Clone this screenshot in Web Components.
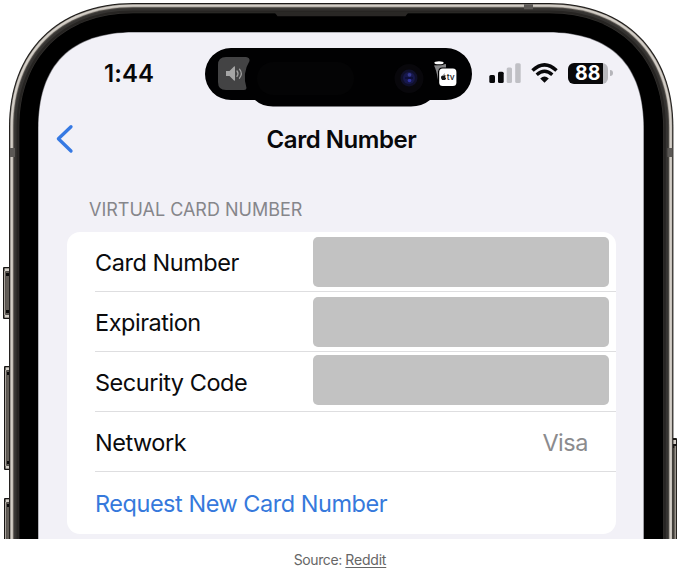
<!DOCTYPE html>
<html lang="en">
<head>
<meta charset="utf-8">
<title>Card Number</title>
<style>
html,body{margin:0;background:#fff}
body{width:680px;height:569px;overflow:hidden;font-family:Inter,"Liberation Sans",sans-serif;color:#0b0b0d}
</style>
</head>
<body>
<phone-frame>
  <status-bar time="1:44" level="88"></status-bar>
  <nav-bar>Card Number</nav-bar>
  <list-section>
    <span slot="heading">VIRTUAL CARD NUMBER</span>
    <list-row redacted>Card Number</list-row>
    <list-row redacted>Expiration</list-row>
    <list-row redacted style="--lift:-2px">Security Code</list-row>
    <list-row>Network<span slot="value">Visa</span></list-row>
    <list-row action>Request New Card Number</list-row>
  </list-section>
</phone-frame>
<source-caption>Source: <a>Reddit</a></source-caption>
<script>
const define = (name, html, setup) => customElements.define(name, class extends HTMLElement {
  constructor() {
    super();
    this.attachShadow({mode: 'open'}).innerHTML = html;
  }
  connectedCallback() { if (setup) setup(this, this.shadowRoot); }
});

// Rounded outline with continuous corners: e = corner extent, k = handle ratio.
const outline = (l, t, r, e, k) => {
  const h = e * (1 - k);
  return `M${l} 700V${t+e}C${l} ${t+h} ${l+h} ${t} ${l+e} ${t}H${r-e}C${r-h} ${t} ${r} ${t+h} ${r} ${t+e}V700Z`;
};
const layer = (i, fill) => `<path fill="${fill}" d="${outline(9+i, 3+i, 673.4-i, 124-i, .61)}"/>`;
const sideKey = (x, y, h, w) => `<rect x="${x}" y="${y}" width="${w}" height="${h}" rx="1" fill="#171513"/>
  <rect x="${x+1}" y="${y+4}" width="1.3" height="${h-8}" fill="#aaa49c"/><rect x="${x+2.3}" y="${y+5}" width="${w-3.5}" height="${h-10}" fill="#625d57"/>
  <rect x="${x+1.5}" y="${y+1.3}" width="${w-2}" height="3" fill="#d4cfc8"/><rect x="${x+1.5}" y="${y+h-4.3}" width="${w-2}" height="3" fill="#d4cfc8"/>
  <rect x="${x+3}" y="${y+6}" width="${w-3}" height="3" fill="#0b0a0a"/><rect x="${x+3}" y="${y+h-9}" width="${w-3}" height="3" fill="#0b0a0a"/>`;

define('phone-frame', `<style>
:host{display:block;position:relative;width:680px;height:539px;overflow:hidden}
.case{position:absolute;inset:0;z-index:0}
.screen{position:relative;box-sizing:border-box;width:644px;height:539px;padding:33px 0 0 39px;display:flex;flex-direction:column}
</style>
<svg class="case" width="680" height="539" viewBox="0 0 680 539">
${sideKey(3,267,52,8)}${sideKey(4,366,104,7)}${sideKey(4,498,60,7)}
<rect x="672" y="438" width="5" height="120" rx="1" fill="#191715"/><rect x="673" y="448" width="1.5" height="100" fill="#5f5a54"/><rect x="674.5" y="446" width="1.6" height="100" fill="#9a948c"/><rect x="673" y="440" width="3" height="4" fill="#d4cfc8"/>
${layer(0,'#1c1a18')}${layer(.9,'#6b6660')}${layer(1.5,'#d3cec7')}${layer(3.6,'#aaa49d')}${layer(4.3,'#4a4743')}${layer(5.3,'#353331')}${layer(7.6,'#262422')}${layer(9.8,'#373533')}${layer(10.3,'#000')}
<path d="M275 13H408L405.5 16.3H277.500Z" fill="#292725"/>
<path d="M524 4.200h9v5h-9zM10 148h5v9h-5zM667.400 148h5v9h-5z" fill="#5b5855"/>
<path d="${outline(38,32,643.9,96,.66)}" fill="#77777c"/>
<path d="${outline(38.500,32.600,643.400,96,.66)}" fill="#f2f1f7"/>
</svg>
<div class="screen"><slot></slot></div>`);

define('status-bar', `<style>
:host{display:grid;grid-template-columns:166px 267px 1fr;height:79px;align-items:start}
.time{margin:27px 0 0 65px;font-size:24px;line-height:27px;font-weight:600;letter-spacing:.1px;color:#08080a}
.island{margin-top:15px;display:block}
.icons{display:flex;align-items:center;padding:28px 0 0 17px;height:24px}
.wifi{margin-left:10px}
.bat{margin-left:10px;display:flex;align-items:center;gap:2px}
.cell{width:40px;height:21px;border-radius:6px;background:linear-gradient(90deg,#08080a 35.500px,#b9b9be 35.500px);font-size:19.500px;line-height:20px;font-weight:700;color:#fff;box-sizing:border-box;padding-left:7px}
.cell span{letter-spacing:0}
.nub{width:2.500px;height:6px;background:#b5b5ba;border-radius:0 3px 3px 0}
</style>
<div class="time"></div>
<svg class="island" width="267" height="60" viewBox="205 48 267 60">
<path d="M231 48H446A26 26 0 0 1 446 100H430Q422 106.500 411 106.500H273Q262 106.500 255 100H231A26 26 0 0 1 231 48Z" fill="#010102"/>
<rect x="257" y="62" width="97" height="33" rx="16" fill="#040405"/>
<path d="M226 57H246Q250 57.500 249.500 61Q242 73 246.500 88Q246.500 90 244 90H226Q218 90 218 82V65Q218 57 226 57Z" fill="#434344"/>
<path d="M226 71h3.500l4.500-4.500q1-.8 1 .5v13q0 1.300-1 .5l-4.500-4.500H226z" fill="#a5a5a5"/>
<path d="M237 71q2 2.700 0 5.400M239.500 69.200q3.600 4.500 0 9" fill="none" stroke="#a0a0a0" stroke-width="1.300" stroke-linecap="round"/>
<circle cx="409" cy="78.500" r="14.500" fill="#08070b"/><circle cx="409" cy="78" r="8.500" fill="#10102a"/><circle cx="409" cy="78" r="6" fill="#17184c"/><circle cx="409.500" cy="74.800" r="1.900" fill="#363a90"/><circle cx="409.500" cy="80.500" r="1.800" fill="#3034a0"/><path d="M405 78h8" stroke="#0c0d35" stroke-width="1.500"/>
<path d="M434 65.500L446 64V69L438 71V80Q436.500 70 434 65.500Z" fill="#858587"/><ellipse cx="439" cy="63" rx="5.600" ry="2.300" fill="#010102"/><ellipse cx="439" cy="62.800" rx="4.600" ry="1.500" fill="#fff"/>
<rect x="438.300" y="67.500" width="18.700" height="19" rx="4" fill="#010102"/><rect x="439.200" y="68.600" width="17.200" height="17.400" rx="3.500" fill="#fff"/>
<path d="M443.600 75.600c-1-.6-2.700 0-2.600 1.900.1 1.500 1.200 2.800 1.900 2.600.6-.2.900-.2 1.400 0 .8.200 1.600-1 1.800-1.900-1.200-.6-1.200-1.900-.1-2.400-.8-.8-1.600-.6-2.400-.2zm-.1-.5q0-1.300 1.200-1.600q.1 1.300-1.200 1.600z" fill="#151515"/>
<text x="446.700" y="80.200" font-family="Inter,sans-serif" font-size="8.500" font-weight="500" fill="#222">tv</text>
</svg>
<div class="icons">
<svg width="32" height="21" viewBox="489 63 32 21"><g fill="#08080a"><rect x="489.300" y="75" width="5.700" height="8" rx="1.500"/><rect x="498" y="71.800" width="5.700" height="11.200" rx="1.500"/></g><g fill="#c0c0c5"><rect x="506.700" y="67.500" width="5.300" height="15.500" rx="1.500"/><rect x="515.200" y="63.300" width="5.500" height="19.700" rx="1.500"/></g></svg>
<svg class="wifi" width="27" height="21" viewBox="0 0 27 21" fill="none" stroke="#08080a"><path d="M1.500 7.600Q13.500-3.800 25.500 7.600" stroke-width="3.500"/><path d="M5.700 11.800Q13.500 4.500 21.300 11.800" stroke-width="3.300"/><path d="M9.200 15.500Q13.500 11.500 17.800 15.500L13.500 19.800Z" fill="#08080a" stroke="none"/></svg>
<div class="bat"><div class="cell"><span></span></div><div class="nub"></div></div>
</div>`, (el, root) => {
  root.querySelector('.time').textContent = el.getAttribute('time');
  root.querySelector('.cell span').textContent = el.getAttribute('level');
});

define('nav-bar', `<style>
:host{display:grid;grid-template-columns:52px 1fr 52px;align-items:center;height:54px}
svg{margin-left:17px}
.t{text-align:center;font-size:24px;line-height:30px;padding-top:1px;font-weight:600;letter-spacing:-.45px;color:#08080a}
</style><svg width="19" height="30" viewBox="0 0 19 30"><path d="M15 2.700L2.400 14.800L15 27" fill="none" stroke="#3679e3" stroke-width="3.300" stroke-linecap="round" stroke-linejoin="round"/></svg><div class="t"><slot></slot></div>`);

define('list-section', `<style>
:host{display:block;padding:32px 28px 0 28px}
.h{height:34px;padding-left:22px;font-size:18px;line-height:23px;letter-spacing:0;color:#86868b;white-space:nowrap}
.card{background:#fff;border-radius:13px;overflow:hidden;height:302px;width:549px}
</style><div class="h"><slot name="heading"></slot></div><div class="card"><slot></slot></div>`);

define('list-row', `<style>
:host{display:flex;box-sizing:border-box;height:60px;margin-left:28px;border-bottom:1px solid #dedee0;align-items:center;justify-content:space-between;font-size:23.500px;letter-spacing:-.47px;line-height:30px;white-space:nowrap}
:host([action]){height:62px;border:0;color:#3679dc}
span{padding-top:2px}
.v{color:#8b8b8e;margin-right:28px}
.mask{display:none;width:296px;height:50px;border-radius:5px;background:#c2c2c2;margin:0 7px 0 0}
:host([redacted]) .mask{display:block;transform:translateY(var(--lift,0px))}
:host([redacted]) .v{display:none}
</style><span><slot></slot></span><span class="v"><slot name="value"></slot></span><div class="mask"></div>`);

define('source-caption', `<style>
:host{display:block;height:30px;text-align:center;font-size:14px;line-height:42px;color:#666;letter-spacing:-.4px}
::slotted(a){text-decoration:underline;text-underline-offset:2px;letter-spacing:-.2px}
</style><slot></slot>`);
</script>
</body>
</html>
